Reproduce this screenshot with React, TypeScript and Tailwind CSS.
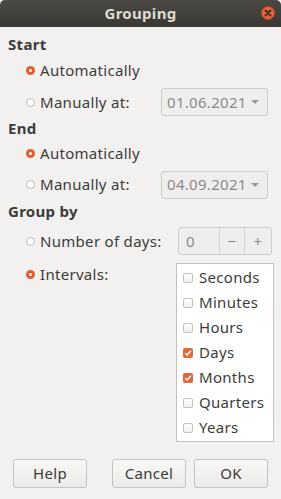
import React from 'react';

const font = "font-['Noto_Sans','DejaVu_Sans',sans-serif]";

function Radio({ on }: { on?: boolean }) {
  return on ? (
    <span className="w-[9px] h-[9px] rounded-full bg-[#e1602f] flex items-center justify-center shrink-0">
      <span className="w-[3px] h-[3px] rounded-full bg-white" />
    </span>
  ) : (
    <span className="w-[9px] h-[9px] rounded-full border border-[#bdbab5] bg-white shrink-0" />
  );
}

function Check({ on }: { on?: boolean }) {
  return on ? (
    <span className="w-[10px] h-[10px] rounded-[2px] bg-[#e2663a] flex items-center justify-center shrink-0">
      <svg width="8" height="8" viewBox="0 0 8 8">
        <path d="M1.2 4.2 L3.2 6 L6.8 1.8" fill="none" stroke="white" strokeWidth="1.5" />
      </svg>
    </span>
  ) : (
    <span className="w-[10px] h-[10px] rounded-[2px] border border-[#c4c1bc] bg-gradient-to-b from-white to-[#f1f0ee] shrink-0" />
  );
}

function Combo({ value }: { value: string }) {
  return (
    <div className="ml-auto mr-[13px] w-[107px] h-[28px] border border-[#cfccc7] rounded-[3px] bg-[#efeeec] flex items-center pl-[5px] pr-[8px] text-[#8b8b8b]">
      <span>{value}</span>
      <span className="ml-auto w-0 h-0 border-l-[4px] border-r-[4px] border-t-[4px] border-l-transparent border-r-transparent border-t-[#9a9a9a]" />
    </div>
  );
}

function Option({ on, label, h }: { on?: boolean; label: string; h: string }) {
  return (
    <div className={`flex items-center pl-[26px] ${h}`}>
      <Radio on={on} />
      <span className="ml-[5px]">{label}</span>
    </div>
  );
}

const units: [string, boolean][] = [
  ['Seconds', false],
  ['Minutes', false],
  ['Hours', false],
  ['Days', true],
  ['Months', true],
  ['Quarters', false],
  ['Years', false],
];

export default function App() {
  return (
    <div className={`w-[281px] h-[499px] bg-[#f2f1f0] text-[15px] tracking-[0.3px] text-[#3c3c3c] flex flex-col ${font}`}>
      <div className="h-[27px] shrink-0 bg-gradient-to-b from-[#4a4944] to-[#3a3935] rounded-t-[5px] flex items-center justify-center relative">
        <span className="font-bold text-[#dfdbd2]">Grouping</span>
        <span className="absolute left-[261px] top-[6px] w-[14px] h-[14px] rounded-full bg-[#e8643a] border border-[#b4471f] flex items-center justify-center">
          <svg width="8" height="8" viewBox="0 0 8 8">
            <path d="M1.5 1.5 L6.5 6.5 M6.5 1.5 L1.5 6.5" stroke="#3a2a24" strokeWidth="1.8" strokeLinecap="round" />
          </svg>
        </span>
      </div>

      <div className="pt-[4px] flex flex-col leading-[19px]">
        <div className="h-[26px] flex items-center pl-[8px] font-bold">Start</div>
        <Option on label="Automatically" h="h-[27px]" />
        <div className="h-[36px] flex items-center pl-[26px]">
          <Radio />
          <span className="ml-[5px]">Manually at:</span>
          <Combo value="01.06.2021" />
        </div>
        <div className="h-[16px] flex items-center pl-[8px] font-bold">End</div>
        <Option on label="Automatically" h="h-[34px]" />
        <div className="h-[29px] flex items-center pl-[26px]">
          <Radio />
          <span className="ml-[5px]">Manually at:</span>
          <Combo value="04.09.2021" />
        </div>
        <div className="h-[24px] flex items-center pl-[8px] font-bold">Group by</div>
        <div className="h-[36px] flex items-center pl-[26px]">
          <Radio />
          <span className="ml-[5px]">Number of days:</span>
          <div className="ml-auto mr-[9px] w-[94px] h-[28px] border border-[#cfccc7] rounded-[3px] bg-[#efeeec] flex text-[#8b8b8b]">
            <span className="w-[41px] flex items-center pl-[7px] border-r border-[#d6d3ce]">0</span>
            <span className="w-[25px] flex items-center justify-center border-r border-[#d6d3ce]">−</span>
            <span className="flex-1 flex items-center justify-center">+</span>
          </div>
        </div>
        <div className="flex pt-[4px]">
          <div className="h-[22px] flex items-center pl-[26px]">
            <Radio on />
            <span className="ml-[5px]">Intervals:</span>
          </div>
          <div className="ml-auto mr-[7px] w-[98px] border border-[#c4c0bb] bg-white py-[1px] flex flex-col">
            {units.map(([name, on]) => (
              <div key={name} className="h-[25px] flex items-center pl-[6px]">
                <Check on={on} />
                <span className="ml-[6px]">{name}</span>
              </div>
            ))}
          </div>
        </div>
      </div>

      <div className="mt-[17px] flex px-[13px]">
        <button className="w-[74px] h-[29px] border border-[#c6c3be] rounded-[3px] bg-gradient-to-b from-[#f8f8f7] to-[#ebeae8]">Help</button>
        <button className="ml-auto w-[74px] h-[29px] border border-[#c6c3be] rounded-[3px] bg-gradient-to-b from-[#f8f8f7] to-[#ebeae8]">Cancel</button>
        <button className="ml-[8px] w-[74px] h-[29px] border border-[#c6c3be] rounded-[3px] bg-gradient-to-b from-[#f8f8f7] to-[#ebeae8]">OK</button>
      </div>
    </div>
  );
}
